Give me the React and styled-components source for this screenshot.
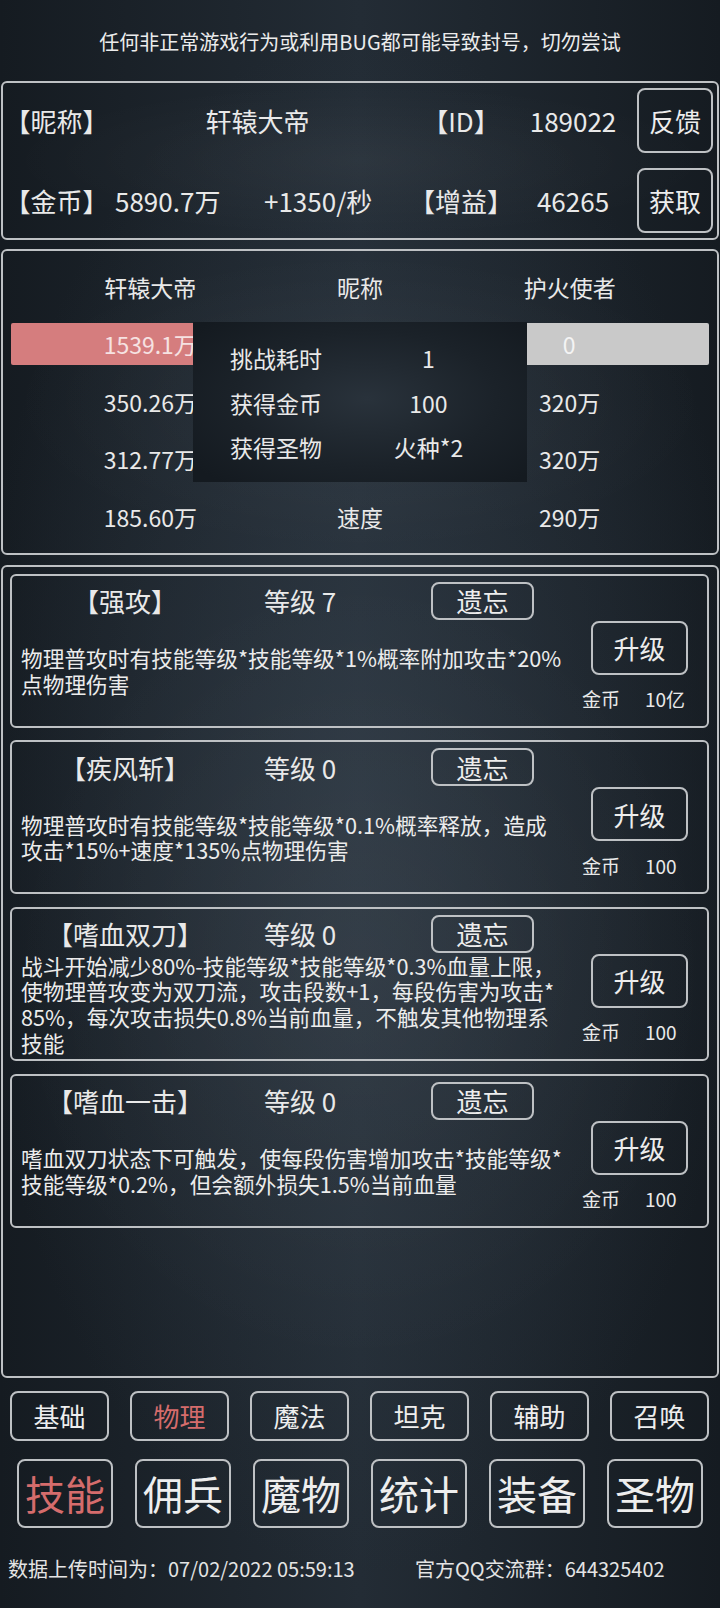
import React from "react";
import styled, { createGlobalStyle } from "styled-components";

const GlobalStyle = createGlobalStyle`
  html, body {
    margin: 0;
    padding: 0;
  }
  body {
    background: #161c22;
    font-family: "Noto Sans CJK SC", "Noto Sans", sans-serif;
    color: #e9e9e9;
  }
  * {
    box-sizing: border-box;
  }
`;

const RED = "#d56c6c";
const LINE = "#bec1c4";

const Page = styled.div`
  width: 720px;
  min-height: 1608px;
  padding: 0 1px;
  display: flex;
  flex-direction: column;
  background:
    radial-gradient(ellipse 55% 48% at 50% 50%, rgba(54, 66, 78, 0.55), rgba(54, 66, 78, 0) 100%),
    linear-gradient(90deg, #151b21 0%, #232c35 50%, #151b21 100%);
`;

const Notice = styled.div`
  height: 81px;
  padding-top: 2px;
  display: flex;
  align-items: center;
  justify-content: center;
  font-size: 20px;
  color: #ececec;
`;

const Panel = styled.div`
  border: 2px solid ${LINE};
  border-radius: 6px;
  background: radial-gradient(ellipse at 50% 50%, rgba(255, 255, 255, 0.04), rgba(255, 255, 255, 0) 70%);
`;

const InfoPanel = styled(Panel)`
  height: 159px;
  padding: 5px 4px 4px 0;
  display: flex;
  flex-direction: column;
  gap: 15px;
`;

const InfoRow = styled.div`
  height: 65px;
  display: grid;
  grid-template-columns: 107px 295px 112px 112px 84px;
  align-items: center;
  font-size: 26px;
`;

const Cell = styled.div`
  text-align: center;
  white-space: nowrap;
`;

const Split = styled.div`
  display: flex;
  white-space: nowrap;
  span:first-child {
    width: 150px;
    padding-left: 5px;
  }
  span:last-child {
    padding-left: 4px;
  }
`;

const OutlineButton = styled.button`
  font-family: inherit;
  color: #ededed;
  background: transparent;
  border: 2px solid ${LINE};
  border-radius: 8px;
  padding: 0;
  display: flex;
  align-items: center;
  justify-content: center;
  white-space: nowrap;
`;

const InfoButton = styled(OutlineButton)`
  justify-self: end;
  width: 76px;
  height: 65px;
  font-size: 26px;
`;

const BattlePanel = styled(Panel)`
  position: relative;
  margin-top: 9px;
  padding: 7px 0;
`;

const StatRow = styled.div`
  height: 57.5px;
  padding: 0 42.5px;
  display: grid;
  grid-template-columns: repeat(3, 1fr);
  align-items: center;
  text-align: center;
  font-size: 23px;
  white-space: nowrap;
`;

const BarRow = styled.div`
  height: 57.5px;
  padding: 0 8px;
  display: flex;
  align-items: center;
`;

const HpBar = styled.div`
  width: 50%;
  height: 42px;
  border-radius: 2px;
  background: ${(p) => p.$color};
  color: ${(p) => p.$text};
  display: flex;
  align-items: center;
  padding-left: ${(p) => p.$pad}px;
  font-size: 23px;
`;

const HpValue = styled.span`
  width: 209.5px;
  text-align: center;
`;

const ResultBox = styled.div`
  position: absolute;
  left: 190px;
  top: 71px;
  width: 334px;
  height: 160px;
  padding: 14px 0 0 37px;
  background: radial-gradient(ellipse 65% 70% at 52% 48%, #29323b 0%, #1b2229 60%, #141a20 100%);
`;

const ResultRow = styled.div`
  height: 44.5px;
  display: grid;
  grid-template-columns: 100px 1fr;
  align-items: center;
  font-size: 23px;
  span:last-child {
    text-align: center;
  }
`;

const SkillPanel = styled(Panel)`
  margin-top: 10px;
  height: 813px;
  padding: 7px 8px 0 7px;
  display: flex;
  flex-direction: column;
  gap: 12.7px;
`;

const SkillCard = styled.div`
  height: 154px;
  border: 2px solid ${LINE};
  border-radius: 6px;
  display: flex;
`;

const CardMain = styled.div`
  flex: 1;
  display: flex;
  flex-direction: column;
`;

const CardHead = styled.div`
  height: 44px;
  padding-top: 6px;
  display: flex;
  align-items: center;
  font-size: 26px;
  white-space: nowrap;
`;

const SkillName = styled.div`
  width: 226px;
  text-align: center;
`;

const SkillLevel = styled.div`
  width: 193px;
  padding-left: 26px;
`;

const ForgetButton = styled(OutlineButton)`
  width: 103px;
  height: 38px;
  font-size: 26px;
`;

const DescArea = styled.div`
  flex: 1;
  display: flex;
  align-items: center;
  padding: 0 0 4px 9px;
`;

const Desc = styled.p`
  margin: 0;
  font-size: 21.7px;
  line-height: 25.6px;
  white-space: pre;
  color: #ececec;
`;

const CardSide = styled.div`
  width: 135px;
  padding-top: 45px;
  display: flex;
  flex-direction: column;
  align-items: center;
`;

const UpgradeButton = styled(OutlineButton)`
  width: 97px;
  height: 54px;
  font-size: 26px;
`;

const Cost = styled.div`
  align-self: stretch;
  margin-top: 11px;
  height: 26px;
  padding-left: 10px;
  display: flex;
  align-items: center;
  gap: 25px;
  font-size: 19px;
  white-space: nowrap;
`;

const TabRow = styled.div`
  display: flex;
  gap: ${(p) => p.$gap}px;
  padding-left: ${(p) => p.$pad}px;
  margin-top: ${(p) => p.$top}px;
`;

const Tab = styled(OutlineButton)`
  width: ${(p) => p.$w}px;
  height: ${(p) => p.$h}px;
  font-size: ${(p) => p.$size}px;
  color: ${(p) => (p.$active ? RED : "#eeeeee")};
`;

const Footer = styled.div`
  margin-top: 27px;
  height: 28px;
  padding-left: 7px;
  display: flex;
  align-items: center;
  font-size: 20px;
  color: #e4e4e4;
  white-space: nowrap;
  span:first-child {
    width: 407px;
  }
`;

const skills = [
  {
    name: "【强攻】",
    level: 7,
    desc: "物理普攻时有技能等级*技能等级*1%概率附加攻击*20%\n点物理伤害",
    cost: "10亿",
  },
  {
    name: "【疾风斩】",
    level: 0,
    desc: "物理普攻时有技能等级*技能等级*0.1%概率释放，造成\n攻击*15%+速度*135%点物理伤害",
    cost: "100",
  },
  {
    name: "【嗜血双刀】",
    level: 0,
    desc: "战斗开始减少80%-技能等级*技能等级*0.3%血量上限，\n使物理普攻变为双刀流，攻击段数+1，每段伤害为攻击*\n85%，每次攻击损失0.8%当前血量，不触发其他物理系\n技能",
    cost: "100",
  },
  {
    name: "【嗜血一击】",
    level: 0,
    desc: "嗜血双刀状态下可触发，使每段伤害增加攻击*技能等级*\n技能等级*0.2%，但会额外损失1.5%当前血量",
    cost: "100",
  },
];

const stats = [
  ["350.26万", "攻击", "320万"],
  ["312.77万", "防御", "320万"],
  ["185.60万", "速度", "290万"],
];

const categories = ["基础", "物理", "魔法", "坦克", "辅助", "召唤"];
const menus = ["技能", "佣兵", "魔物", "统计", "装备", "圣物"];

const App = () => {
  return (
    <Page>
      <GlobalStyle />
      <Notice>任何非正常游戏行为或利用BUG都可能导致封号，切勿尝试</Notice>

      <InfoPanel>
        <InfoRow>
          <Cell>【昵称】</Cell>
          <Cell>轩辕大帝</Cell>
          <Cell>【ID】</Cell>
          <Cell>189022</Cell>
          <InfoButton>反馈</InfoButton>
        </InfoRow>
        <InfoRow>
          <Cell>【金币】</Cell>
          <Split>
            <span>5890.7万</span>
            <span>+1350/秒</span>
          </Split>
          <Cell>【增益】</Cell>
          <Cell>46265</Cell>
          <InfoButton>获取</InfoButton>
        </InfoRow>
      </InfoPanel>

      <BattlePanel>
        <StatRow>
          <span>轩辕大帝</span>
          <span>昵称</span>
          <span>护火使者</span>
        </StatRow>
        <BarRow>
          <HpBar $color="#d57d7e" $text="#f6e2e2" $pad={34.5}>
            <HpValue>1539.1万</HpValue>
          </HpBar>
          <HpBar $color="#c9c9c9" $text="#f4f4f4" $pad={104.5}>
            <HpValue>0</HpValue>
          </HpBar>
        </BarRow>
        {stats.map((row) => (
          <StatRow key={row[1]}>
            {row.map((v, i) => (
              <span key={i}>{v}</span>
            ))}
          </StatRow>
        ))}
        <ResultBox>
          <ResultRow>
            <span>挑战耗时</span>
            <span>1</span>
          </ResultRow>
          <ResultRow>
            <span>获得金币</span>
            <span>100</span>
          </ResultRow>
          <ResultRow>
            <span>获得圣物</span>
            <span>火种*2</span>
          </ResultRow>
        </ResultBox>
      </BattlePanel>

      <SkillPanel>
        {skills.map((s) => (
          <SkillCard key={s.name}>
            <CardMain>
              <CardHead>
                <SkillName>{s.name}</SkillName>
                <SkillLevel>等级 {s.level}</SkillLevel>
                <ForgetButton>遗忘</ForgetButton>
              </CardHead>
              <DescArea>
                <Desc>{s.desc}</Desc>
              </DescArea>
            </CardMain>
            <CardSide>
              <UpgradeButton>升级</UpgradeButton>
              <Cost>
                <span>金币</span>
                <span>{s.cost}</span>
              </Cost>
            </CardSide>
          </SkillCard>
        ))}
      </SkillPanel>

      <TabRow $gap={21} $pad={9} $top={13}>
        {categories.map((c) => (
          <Tab key={c} $w={99} $h={50} $size={26} $active={c === "物理"}>
            {c}
          </Tab>
        ))}
      </TabRow>
      <TabRow $gap={22} $pad={16} $top={18}>
        {menus.map((m) => (
          <Tab key={m} $w={96} $h={69} $size={40} $active={m === "技能"}>
            {m}
          </Tab>
        ))}
      </TabRow>

      <Footer>
        <span>数据上传时间为：07/02/2022 05:59:13</span>
        <span>官方QQ交流群：644325402</span>
      </Footer>
    </Page>
  );
};

export default App;
